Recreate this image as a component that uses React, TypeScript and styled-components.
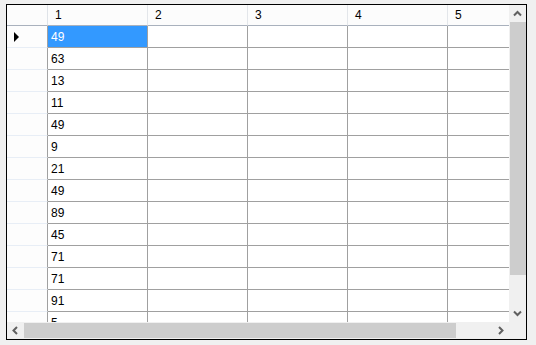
import styled, { createGlobalStyle } from 'styled-components';

const GlobalStyle = createGlobalStyle`
  html, body {
    margin: 0;
    padding: 0;
    background: #f0f0f0;
  }
  body {
    font-family: "Liberation Sans", Arial, sans-serif;
    font-size: 12px;
  }
`;

const Page = styled.div`
  padding: 4px 0 0 6px;
`;

const Frame = styled.div`
  width: 519px;
  height: 334px;
  border: 1px solid #000;
  background: #ffffff;
  display: grid;
  grid-template-columns: 502px 17px;
  grid-template-rows: 317px 17px;
`;

const Viewport = styled.div`
  overflow: hidden;
  background: #ffffff;
`;

const Row = styled.div`
  display: flex;
  width: max-content;
`;

const HeaderCorner = styled.div`
  width: 40px;
  height: 20px;
  background: #fcfcfc;
  border-right: 1px solid #dfe3e8;
  border-bottom: 1px solid #a9b1bd;
  flex-shrink: 0;
`;

const ColumnHeader = styled.div`
  width: 92px;
  height: 20px;
  padding-left: 7px;
  background: #fcfcfc;
  border-right: 1px solid #e3e6ea;
  border-bottom: 1px solid #a9b1bd;
  display: flex;
  align-items: center;
  color: #000;
  flex-shrink: 0;
`;

const RowHeader = styled.div`
  width: 33px;
  height: 21px;
  padding-left: 7px;
  background: #fdfdfd;
  border-right: 1px solid #a0a0a0;
  border-bottom: 1px solid #e8eef6;
  display: flex;
  align-items: center;
  flex-shrink: 0;
`;

const Indicator = styled.span`
  width: 0;
  height: 0;
  border-left: 5px solid #000;
  border-top: 5px solid transparent;
  border-bottom: 5px solid transparent;
`;

const Cell = styled.div<{ $selected?: boolean }>`
  width: 96px;
  height: 21px;
  padding-left: 3px;
  background: ${p => (p.$selected ? '#3399ff' : '#ffffff')};
  color: ${p => (p.$selected ? '#ffffff' : '#000000')};
  border-right: 1px solid #a0a0a0;
  border-bottom: 1px solid #a0a0a0;
  display: flex;
  align-items: center;
  flex-shrink: 0;
`;

const ScrollBar = styled.div<{ $vertical?: boolean }>`
  background: #f0f0f0;
  display: flex;
  flex-direction: ${p => (p.$vertical ? 'column' : 'row')};
  overflow: hidden;
`;

const ArrowButton = styled.div`
  width: 17px;
  height: 17px;
  flex-shrink: 0;
  display: flex;
  align-items: center;
  justify-content: center;
`;

const Track = styled.div<{ $vertical?: boolean }>`
  flex: 1;
  display: flex;
  flex-direction: ${p => (p.$vertical ? 'column' : 'row')};
`;

const Thumb = styled.div<{ $vertical?: boolean }>`
  background: #cdcdcd;
  ${p => (p.$vertical ? 'width: 16px; margin-left: 1px;' : 'height: 15px; margin-top: 1px;')}
  flex-shrink: 0;
`;

const Corner = styled.div`
  background: #f0f0f0;
`;

type Dir = 'up' | 'down' | 'left' | 'right';

const chevron: Record<Dir, string> = {
  up: '5,10.5 8.5,7 12,10.5',
  down: '5,6.5 8.5,10 12,6.5',
  left: '10,5 6.5,8.5 10,12',
  right: '7,5 10.5,8.5 7,12',
};

function Arrow({ dir }: { dir: Dir }) {
  return (
    <ArrowButton>
      <svg width="17" height="17" viewBox="0 0 17 17">
        <polyline points={chevron[dir]} fill="none" stroke="#606060" strokeWidth="2" />
      </svg>
    </ArrowButton>
  );
}

const values = [49, 63, 13, 11, 49, 9, 21, 49, 89, 45, 71, 71, 91, 5, 33];
const columns = ['1', '2', '3', '4', '5'];

export default function App() {
  return (
    <>
      <GlobalStyle />
      <Page>
        <Frame>
          <Viewport>
            <Row>
              <HeaderCorner />
              {columns.map(c => (
                <ColumnHeader key={c}>{c}</ColumnHeader>
              ))}
            </Row>
            {values.map((v, i) => (
              <Row key={i}>
                <RowHeader>{i === 0 && <Indicator />}</RowHeader>
                {columns.map((c, j) => (
                  <Cell key={c} $selected={i === 0 && j === 0}>
                    {j === 0 ? v : ''}
                  </Cell>
                ))}
              </Row>
            ))}
          </Viewport>
          <ScrollBar $vertical>
            <Arrow dir="up" />
            <Track $vertical>
              <Thumb $vertical style={{ height: 253 }} />
            </Track>
            <Arrow dir="down" />
          </ScrollBar>
          <ScrollBar>
            <Arrow dir="left" />
            <Track>
              <Thumb style={{ width: 432 }} />
            </Track>
            <Arrow dir="right" />
          </ScrollBar>
          <Corner />
        </Frame>
      </Page>
    </>
  );
}
